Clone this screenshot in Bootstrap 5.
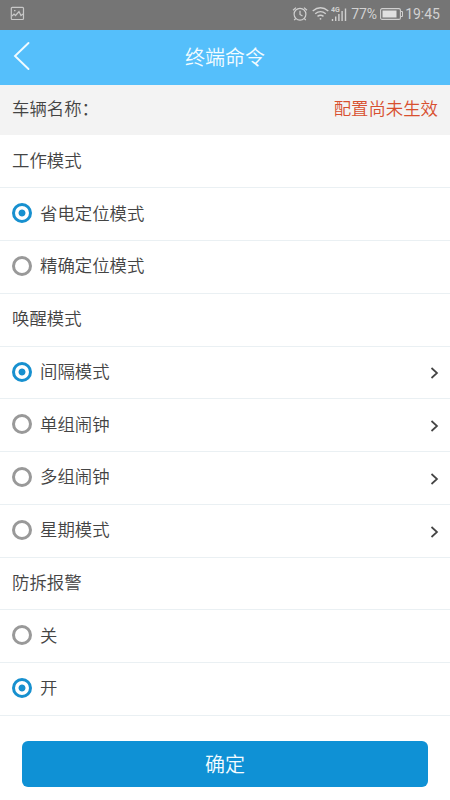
<!DOCTYPE html>
<html lang="zh-CN">
<head>
<meta charset="utf-8">
<meta name="viewport" content="width=device-width, initial-scale=1">
<title>终端命令</title>
<link href="https://cdn.jsdelivr.net/npm/bootstrap@5.3.0/dist/css/bootstrap.min.css" rel="stylesheet">
<style>
body{font-family:"Noto Sans CJK SC",sans-serif;font-size:17.4px;font-weight:350;line-height:26px;color:#444;background:#fff;height:800px;overflow:hidden}
.statusbar{height:30px;background:#757575;color:#d2d2d2;font:14px/28px Roboto,sans-serif;padding:0 10px 3px}
.statusbar svg{display:block;flex:none}
.signal{margin:0 4px 0 2px}
.battery-icon{margin:0 2px 0 3px}
.titlebar{height:55px;background:#55bffb;color:#f4fcff;font-size:20px;padding-bottom:2px}
.titlebar .back{width:44px;flex:none}
.vehicle{height:50px;background:#f3f3f3;padding:0 12px 5px}
.unset{color:#d8502f}
.options{padding-top:.6px}
.options .list-group-item{height:52.75px;padding:0 11px 3px 12px;border-color:#eaf0f3;color:#444;background:#fff}
.options .list-group-item:last-child{border-bottom-width:1px}
.options .form-check-input{width:20px;height:20px;margin:1.5px 8px 0 0;border:3.5px solid #999;background:#fff;flex:none;box-shadow:none}
.options .form-check-input:checked{border-color:#1790cf;background:radial-gradient(circle,#1790cf 3px,#fff 3.9px)}
.chev{width:9px;height:12px;margin-top:5px}
.confirm-area{padding:25.4px 22px 0}
.confirm{height:46px;background:#0f91d5;color:#f4fcff;font-size:20px;font-weight:350;border:0;border-radius:6px;padding:0}
</style>
<script src="https://cdn.jsdelivr.net/npm/bootstrap@5.3.0/dist/js/bootstrap.bundle.min.js"></script>
</head>
<body>
<svg class="d-none"><symbol id="chevron" viewBox="0 0 9 12"><path d="M1.5 1l5.5 5-5.5 5" fill="none" stroke="#444" stroke-width="1.7"/></symbol></svg>
<div class="statusbar d-flex align-items-center">
  <svg class="me-auto" width="15" height="15" viewBox="0 0 15 15" fill="none" stroke="#c8c8c8" stroke-width="1.2"><rect x="1.3" y="1.3" width="12.2" height="12.2" rx="1"/><path d="M2 10l2-2 1.5 1.5L9 5.500l2 4 2-1.500M4 4.700h1.500"/></svg>
  <svg width="16" height="16" viewBox="0 0 16 16" fill="none" stroke="#d0d0d0" stroke-width="1.2"><circle cx="8" cy="8.200" r="5.900"/><path d="M8 4.800v3.700l2.500 1.500M1 4.300l3-2.700M15 4.300l-3-2.700M3.700 12.500l-1.500 1.700M12.300 12.500l1.500 1.700"/></svg>
  <svg class="ms-1" width="17" height="15" viewBox="0 0 17 15" fill="none" stroke="#d0d0d0" stroke-width="1.400"><path d="M.7 5q7.800-6.500 15.600 0M3.200 7.800q5.300-4.400 10.600 0M5.500 10.400q3-2.400 6 0"/><circle cx="8.500" cy="12.800" r=".9" fill="#d0d0d0" stroke="none"/></svg>
  <svg class="signal" width="16" height="18" viewBox="0 0 16 18" fill="#d0d0d0"><text x="0" y="7" font-size="7" font-weight="bold" font-family="Roboto">4G</text><path d="M.8 14h1.400v2H.8zM4 11.500h1.400V16H4zM7.200 9h1.400v7H7.200zM10.400 6h1.400v10h-1.400zM13.800 3.500h1.400v12.500h-1.400z"/></svg>
  <span>77%</span>
  <svg class="battery-icon" width="23" height="12" viewBox="0 0 23 12"><rect x=".6" y=".6" width="19.800" height="10.800" rx="1.500" fill="none" stroke="#d0d0d0" stroke-width="1.100"/><path d="M2.500 2.500h14v7h-14z" fill="#e0e0e0"/><path d="M21 3.500h1.500v5H21" fill="none" stroke="#d0d0d0"/></svg>
  <span>19:45</span>
</div>
<header class="titlebar d-flex align-items-center">
  <div class="back"><svg class="d-block" width="44" height="55" viewBox="0 0 44 55"><path d="M28.500 14L15 27l13.500 13" fill="none" stroke="#f0fbff" stroke-width="1.900" stroke-linecap="round"/></svg></div>
  <div class="flex-grow-1 text-center">终端命令</div>
  <div class="back"></div>
</header>
<div class="vehicle d-flex align-items-center justify-content-between"><span>车辆名称：</span><span class="unset">配置尚未生效</span></div>
<div class="options list-group list-group-flush">
  <div class="list-group-item d-flex align-items-center">工作模式</div>
  <label class="list-group-item d-flex align-items-center"><input class="form-check-input" type="radio" name="work" checked>省电定位模式</label>
  <label class="list-group-item d-flex align-items-center"><input class="form-check-input" type="radio" name="work">精确定位模式</label>
  <div class="list-group-item d-flex align-items-center">唤醒模式</div>
  <label class="list-group-item d-flex align-items-center"><input class="form-check-input" type="radio" name="wake" checked>间隔模式<svg class="chev ms-auto"><use href="#chevron"/></svg></label>
  <label class="list-group-item d-flex align-items-center"><input class="form-check-input" type="radio" name="wake">单组闹钟<svg class="chev ms-auto"><use href="#chevron"/></svg></label>
  <label class="list-group-item d-flex align-items-center"><input class="form-check-input" type="radio" name="wake">多组闹钟<svg class="chev ms-auto"><use href="#chevron"/></svg></label>
  <label class="list-group-item d-flex align-items-center"><input class="form-check-input" type="radio" name="wake">星期模式<svg class="chev ms-auto"><use href="#chevron"/></svg></label>
  <div class="list-group-item d-flex align-items-center">防拆报警</div>
  <label class="list-group-item d-flex align-items-center"><input class="form-check-input" type="radio" name="alarm">关</label>
  <label class="list-group-item d-flex align-items-center"><input class="form-check-input" type="radio" name="alarm" checked>开</label>
</div>
<div class="d-grid confirm-area"><button class="btn btn-primary confirm" type="button">确定</button></div>
</body>
</html>
